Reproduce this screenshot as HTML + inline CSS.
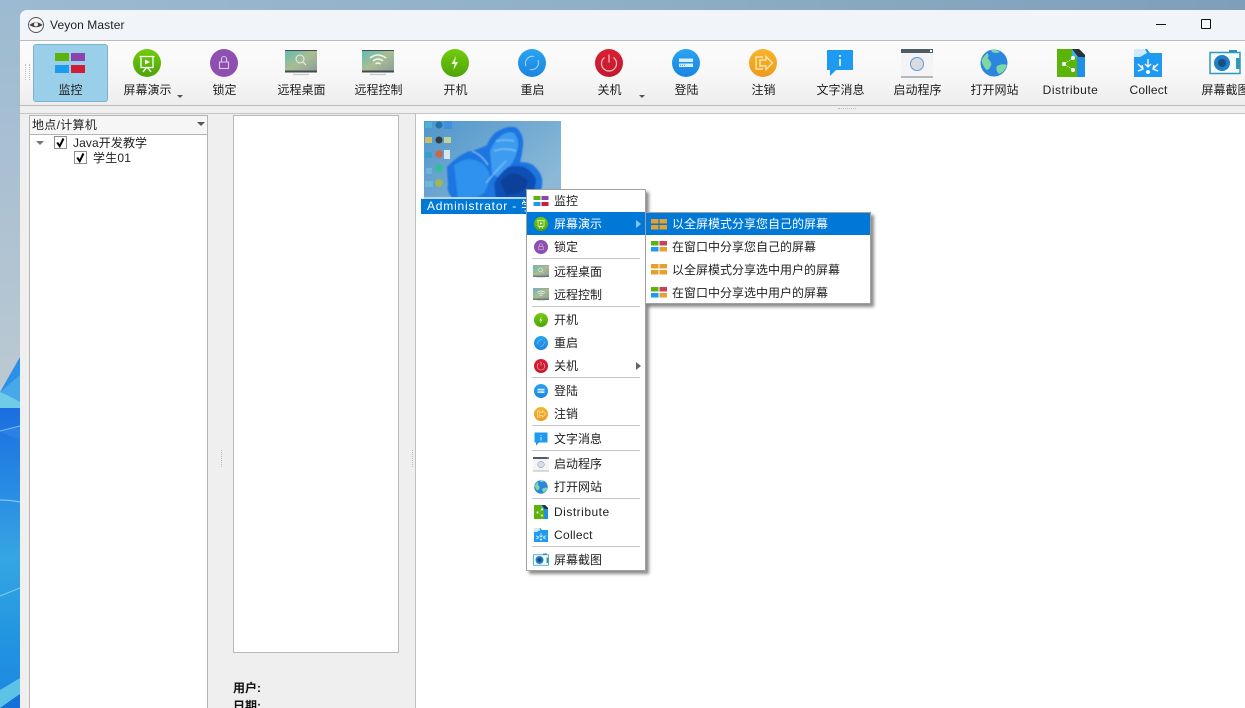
<!DOCTYPE html>
<html lang="zh"><head><meta charset="utf-8"><title>Veyon Master</title>
<style>
html,body{margin:0;padding:0;width:1245px;height:708px;overflow:hidden;background:#9ab8cf}
body{position:relative;font:12px/16px "Liberation Sans","Noto Sans CJK SC",sans-serif;color:#1a1a1a}
div,svg{position:absolute;box-sizing:border-box}
.l{width:77px;top:82px;text-align:center;white-space:nowrap;line-height:16px;color:#1e1e1e}
.ti{top:47px;width:32px;height:32px}
.mi{left:533px;width:16px;height:16px;margin-top:1px}
.mt{left:554px;white-space:nowrap;color:#1e1e1e;line-height:16px;margin-top:1px}
.sep{left:532px;width:108px;height:1px;background:#c6c6c6}
.st{left:672px;white-space:nowrap;color:#1e1e1e;line-height:16px}
.si{left:651px;width:16px;height:11px}
.cb{width:13px;height:13px;background:#fff;border:1px solid #8f8f8f}
</style></head><body>
<svg width="0" height="0" style="left:0;top:0">
<defs>
<linearGradient id="gg" x1="0" y1="0" x2="0" y2="1"><stop offset="0" stop-color="#72cc0c"/><stop offset="1" stop-color="#4ea30a"/></linearGradient>
<linearGradient id="gb" x1="0" y1="0" x2="0" y2="1"><stop offset="0" stop-color="#2aa4f0"/><stop offset="1" stop-color="#1b84e2"/></linearGradient>
<linearGradient id="gr" x1="0" y1="0" x2="0" y2="1"><stop offset="0" stop-color="#dc1f33"/><stop offset="1" stop-color="#c01a30"/></linearGradient>
<linearGradient id="go" x1="0" y1="0" x2="0" y2="1"><stop offset="0" stop-color="#f6b52c"/><stop offset="1" stop-color="#ee9a1e"/></linearGradient>
<linearGradient id="gs" x1="0" y1="0" x2="1" y2="1"><stop offset="0" stop-color="#5fbcb4"/><stop offset=".5" stop-color="#a9bd92"/><stop offset="1" stop-color="#8a9c9c"/></linearGradient>
<symbol id="i-mon" viewBox="0 0 32 32"><rect x="1" y="6" width="14" height="8" fill="#5cb30b"/><rect x="17" y="6" width="14" height="8" fill="#8e44ad"/><rect x="1" y="18" width="14" height="8" fill="#1e9bf0"/><rect x="17" y="18" width="14" height="8" fill="#d01c34"/></symbol>
<symbol id="i-dem" viewBox="0 0 32 32"><circle cx="16" cy="16" r="14" fill="url(#gg)"/><path d="M8.500 9.500h15M10 9.500v11h12v-11M16 20.500v1M12 25l3-4M20 25l-3-4" fill="none" stroke="#fff" stroke-width="1.300"/><path d="M14 12.500l5 2.500-5 2.500z" fill="#fff"/></symbol>
<symbol id="i-lock" viewBox="0 0 32 32"><circle cx="16" cy="16" r="14" fill="#8e4fb0"/><rect x="11.500" y="15" width="9" height="6.500" fill="none" stroke="#dcc6e8" stroke-width="1.100"/><path d="M13.500 15v-3a2.500 2.500 0 0 1 5 0v3" fill="none" stroke="#dcc6e8" stroke-width="1.100"/></symbol>
<symbol id="i-rd" viewBox="0 0 32 32"><rect x="0" y="3" width="32" height="22" fill="url(#gs)"/><path d="M0 3h32v1H0zM0 23.500h32v2H0z" fill="#454a50"/><path d="M8 27.500h16" stroke="#c5c8ca" stroke-width="1.300"/><circle cx="15" cy="12" r="4" fill="none" stroke="#e8eeee"/><path d="M18 15l3 3" stroke="#e8eeee"/></symbol>
<symbol id="i-rc" viewBox="0 0 32 32"><rect x="0" y="3" width="32" height="22" fill="url(#gs)"/><path d="M0 3h32v1H0zM0 23.500h32v2H0z" fill="#454a50"/><path d="M8 27.500h16" stroke="#c5c8ca" stroke-width="1.300"/><path d="M8 11q8-6 16 0M11 14q5-4 10 0M13.500 17q2.500-2 5 0" fill="none" stroke="#f1f5f2" stroke-width="1.500"/></symbol>
<symbol id="i-on" viewBox="0 0 32 32"><circle cx="16" cy="16" r="14" fill="url(#gg)"/><path d="M17 9l-4.500 8h3l-1 6 4.500-8h-3z" fill="#eaf8d8"/></symbol>
<symbol id="i-re" viewBox="0 0 32 32"><circle cx="16" cy="16" r="14" fill="url(#gb)"/><path d="M10 19a7 7 0 0 1 8-9.500M22 13a7 7 0 0 1-8 9.500" fill="none" stroke="#a9d8f8" stroke-width="1"/></symbol>
<symbol id="i-off" viewBox="0 0 32 32"><circle cx="16" cy="16" r="14" fill="url(#gr)"/><path d="M11.500 10.500a7.500 7.500 0 1 0 9 0" fill="none" stroke="#f4c2c8" stroke-width="1.200"/><path d="M16 7.500v8" stroke="#f4c2c8" stroke-width="1.200"/></symbol>
<symbol id="i-log" viewBox="0 0 32 32"><circle cx="16" cy="16" r="14" fill="url(#gb)"/><rect x="9" y="11.500" width="14" height="3.500" fill="#d9eefc"/><rect x="9" y="16.500" width="14" height="3.500" fill="#d9eefc"/><path d="M10 18.200h5" stroke="#2a8fe0" stroke-dasharray="1 1"/></symbol>
<symbol id="i-out" viewBox="0 0 32 32"><circle cx="16" cy="16" r="14" fill="url(#go)"/><path d="M16 10H9v12h7" fill="none" stroke="#fde3a6" stroke-width="1.500"/><path d="M13 13h6v-3.500l6.500 6.500-6.500 6.500V19h-6z" fill="none" stroke="#fde3a6" stroke-width="1.500"/></symbol>
<symbol id="i-msg" viewBox="0 0 32 32"><path d="M3 3h26v20H12l-6 6v-6H3z" fill="#1e9bf0"/><rect x="15" y="8" width="2" height="2" fill="#cfeafc"/><rect x="15" y="12" width="2" height="7" fill="#cfeafc"/></symbol>
<symbol id="i-app" viewBox="0 0 32 32"><rect x="0" y="2" width="32" height="29" fill="#f4f4f6"/><rect x="0" y="2" width="32" height="4" fill="#4f5b66"/><rect x="29" y="3" width="2" height="2" fill="#fff"/><rect x="0" y="29" width="32" height="2" fill="#b5b8ba"/><circle cx="16" cy="17" r="6.500" fill="#d9dde2" stroke="#5d9ad6" stroke-width="1"/></symbol>
<symbol id="i-web" viewBox="0 0 32 32"><circle cx="16" cy="16" r="13.500" fill="#2a86de"/><path d="M3.500 13q3-5 6-7 2 3 0 5 3 3 4 6-2 6-5 6-4-4-5-10zM13 3q5-1 9 2-4 2-8 0zM19 19q6-3 10-1-2 7-8 9-4-4-2-8z" fill="#7fd7a4"/></symbol>
<symbol id="i-dis" viewBox="0 0 32 32"><path d="M2 2h22l6 6v22H2z" fill="#5cb30b"/><path d="M22 2h2l6 6v22h-8z" fill="#1e90e8"/><path d="M17 2h7l6 6v2h-7z" fill="#2b3138"/><path d="M17 2l6 8h-6z" fill="#35b6e8"/><circle cx="9" cy="17" r="2" fill="#fff"/><circle cx="18" cy="11" r="2" fill="#fff"/><circle cx="18" cy="23" r="2" fill="#fff"/><path d="M9 17l9-6M9 17l9 6" stroke="#fff" stroke-width=".7" stroke-dasharray="1 1"/></symbol>
<symbol id="i-col" viewBox="0 0 32 32"><path d="M2 2h13l3 4h12v24H2z" fill="#1e9bf0"/><path d="M2 2h11l2 4-7 4H2z" fill="#cfeafc"/><path d="M16 12v8M13 17l3 3 3-3M6 17l5 5M6 24l5-2-1-4M26 17l-5 5M26 24l-5-2 1-4" fill="none" stroke="#fff" stroke-width="1.300"/><circle cx="16" cy="25" r="2" fill="#fff"/></symbol>
<symbol id="i-shot" viewBox="0 0 32 32"><rect x="20" y="3" width="8" height="3" fill="#2b8fb0"/><rect x="1" y="5.500" width="30" height="21" fill="#f6fafb" stroke="#2f9ab8" stroke-width="1.500"/><circle cx="13" cy="16" r="8" fill="#1f7fc8"/><circle cx="13" cy="16" r="4" fill="#17507f"/><rect x="27" y="11" width="4" height="11" fill="#2f9ab8"/></symbol>
<symbol id="i-s1" viewBox="0 0 16 11"><rect x="0" y="0" width="7.500" height="4.500" fill="#e6a02c"/><rect x="8.500" y="0" width="7.500" height="4.500" fill="#e6a02c"/><rect x="0" y="6" width="7.500" height="4.500" fill="#e6a02c"/><rect x="8.500" y="6" width="7.500" height="4.500" fill="#e6a02c"/></symbol>
<symbol id="i-s2" viewBox="0 0 16 11"><rect x="0" y="0" width="7.500" height="4.500" fill="#5cb30b"/><rect x="8.500" y="0" width="7.500" height="4.500" fill="#c8405c"/><rect x="0" y="6" width="7.500" height="4.500" fill="#1e9bf0"/><rect x="8.500" y="6" width="7.500" height="4.500" fill="#e8a030"/></symbol>
</defs></svg>

<!-- desktop -->
<div style="left:0;top:0;width:1245px;height:10px;background:linear-gradient(90deg,#9cbad1,#92b1ca 40%,#7e9fba)"></div>
<svg style="left:0;top:0" width="20" height="708" viewBox="0 0 20 708">
<defs><linearGradient id="dk" x1="0" y1="0" x2="0" y2="1"><stop offset="0" stop-color="#9cbad1"/><stop offset="1" stop-color="#bcc9d2"/></linearGradient>
<linearGradient id="db" x1="0" y1="0" x2="0" y2="1"><stop offset="0" stop-color="#1a6ee0"/><stop offset=".3" stop-color="#2a8fe4"/><stop offset=".5" stop-color="#35a6e2"/><stop offset=".75" stop-color="#2396e2"/><stop offset="1" stop-color="#1b86de"/></linearGradient></defs>
<rect width="20" height="400" fill="url(#dk)"/>
<path d="M0 392L20 357V408H0z" fill="#2a90e8"/>
<path d="M0 392L20 375V402Q10 396 0 392z" fill="#46a8e8"/>
<path d="M0 392Q10 396 20 402V409H0z" fill="#6fcbe6"/>
<rect y="408" width="20" height="300" fill="url(#db)"/>
<path d="M0 432L20 440V426z" fill="#2a80e4"/>
<path d="M0 431L20 426" stroke="#7cc0ee" stroke-width="1"/>
<path d="M0 500Q10 500 20 502" stroke="#8fd4ee" stroke-width="1" fill="none"/>
<path d="M0 596L20 588" stroke="#7ed0ea" stroke-width="1"/>
<path d="M0 690L20 678V694L0 708z" fill="#5cc2e6"/>
<path d="M0 708L20 694V708z" fill="#1570d8"/>
</svg>

<!-- window -->
<div style="left:20px;top:10px;width:1225px;height:698px;background:#efefef;border-radius:7px 0 0 0;overflow:hidden">
 <div style="left:0;top:0;width:1225px;height:30px;background:#f1f4f9"></div>
 <div style="left:0;top:30px;width:1225px;height:1px;background:#bcbcbc"></div>
 <div style="left:0;top:31px;width:1225px;height:64px;background:linear-gradient(#fbfbfb,#f8f8f8 50%,#ededed)"></div>
 <div style="left:0;top:95px;width:1225px;height:1px;background:#bcbcbc"></div>
 <div style="left:0;top:103px;width:1225px;height:1px;background:#c4c4c4"></div>
</div>

<!-- title bar -->
<svg style="left:27px;top:16px" width="18" height="18" viewBox="0 0 18 18"><circle cx="9" cy="9" r="7.500" fill="#f5f5f5" stroke="#555" stroke-width="1"/><path d="M2.500 9Q9 3.500 15.500 9 9 13.500 2.500 9z" fill="#444"/><circle cx="9" cy="8.500" r="2" fill="#eee"/></svg>
<div style="left:50px;top:17px;color:#222;font-size:12px;letter-spacing:.1px;white-space:nowrap">Veyon Master</div>
<div style="left:1156px;top:24px;width:10px;height:1px;background:#111"></div>
<div style="left:1201px;top:19px;width:10px;height:10px;border:1px solid #111;border-radius:1px"></div>

<!-- toolbar -->
<div style="left:25px;top:64px;width:5px;height:16px;border-left:1px dotted #bbb;border-right:1px dotted #bbb"></div>
<div style="left:33px;top:44px;width:75px;height:58px;background:#99cfe8;border:1px solid #79b4cf;border-radius:3px"></div>
<svg class="ti" style="left:54px"><use href="#i-mon"/></svg>
<svg class="ti" style="left:131px"><use href="#i-dem"/></svg>
<svg class="ti" style="left:208px"><use href="#i-lock"/></svg>
<svg class="ti" style="left:285px"><use href="#i-rd"/></svg>
<svg class="ti" style="left:362px"><use href="#i-rc"/></svg>
<svg class="ti" style="left:439px"><use href="#i-on"/></svg>
<svg class="ti" style="left:516px"><use href="#i-re"/></svg>
<svg class="ti" style="left:593px"><use href="#i-off"/></svg>
<svg class="ti" style="left:670px"><use href="#i-log"/></svg>
<svg class="ti" style="left:747px"><use href="#i-out"/></svg>
<svg class="ti" style="left:824px"><use href="#i-msg"/></svg>
<svg class="ti" style="left:901px"><use href="#i-app"/></svg>
<svg class="ti" style="left:978px"><use href="#i-web"/></svg>
<svg class="ti" style="left:1055px"><use href="#i-dis"/></svg>
<svg class="ti" style="left:1132px"><use href="#i-col"/></svg>
<svg class="ti" style="left:1209px"><use href="#i-shot"/></svg>

<div class="l" style="left:32px">监控</div>
<div class="l" style="left:109px">屏幕演示</div>
<div class="l" style="left:186px">锁定</div>
<div class="l" style="left:263px">远程桌面</div>
<div class="l" style="left:340px">远程控制</div>
<div class="l" style="left:417px">开机</div>
<div class="l" style="left:494px">重启</div>
<div class="l" style="left:571px">关机</div>
<div class="l" style="left:648px">登陆</div>
<div class="l" style="left:725px">注销</div>
<div class="l" style="left:802px">文字消息</div>
<div class="l" style="left:879px">启动程序</div>
<div class="l" style="left:956px">打开网站</div>
<div class="l" style="left:1032px;letter-spacing:.5px">Distribute</div>
<div class="l" style="left:1110px;letter-spacing:.2px">Collect</div>
<div class="l" style="left:1187px">屏幕截图</div>
<div style="left:177px;top:95px;width:0;height:0;border:3px solid transparent;border-top:3px solid #555;border-bottom:0"></div>
<div style="left:639px;top:95px;width:0;height:0;border:3px solid transparent;border-top:3px solid #555;border-bottom:0"></div>
<div style="left:838px;top:108px;width:18px;height:1px;border-top:1px dotted #c0c0c0"></div>

<!-- left panel -->
<div style="left:29px;top:115px;width:179px;height:600px;background:#fff;border:1px solid #b4b4b4"></div>
<div style="left:29px;top:115px;width:179px;height:20px;background:#f6f6f6;border:1px solid #b4b4b4"></div>
<div style="left:32px;top:117px;white-space:nowrap;color:#222;letter-spacing:.3px">地点/计算机</div>
<div style="left:197px;top:122px;width:0;height:0;border:4px solid transparent;border-top:4px solid #555;border-bottom:0"></div>
<div style="left:36px;top:141px;width:0;height:0;border:4px solid transparent;border-top:4px solid #777;border-bottom:0"></div>
<div class="cb" style="left:54px;top:136px"></div>
<svg style="left:54px;top:136px" width="13" height="13" viewBox="0 0 13 13"><path d="M3.200 6.500l2.500 3.700 3.800-7.700" fill="none" stroke="#000" stroke-width="2"/></svg>
<div style="left:73px;top:135px;white-space:nowrap;letter-spacing:.1px;color:#222">Java开发教学</div>
<div class="cb" style="left:74px;top:151px"></div>
<svg style="left:74px;top:151px" width="13" height="13" viewBox="0 0 13 13"><path d="M3.200 6.500l2.500 3.700 3.800-7.700" fill="none" stroke="#000" stroke-width="2"/></svg>
<div style="left:93px;top:150px;white-space:nowrap;letter-spacing:.2px;color:#222">学生01</div>

<!-- grips -->
<div style="left:221px;top:450px;width:1px;height:17px;border-left:1px dotted #bbb"></div>
<div style="left:412px;top:450px;width:1px;height:17px;border-left:1px dotted #bbb"></div>

<!-- middle panel -->
<div style="left:233px;top:115px;width:166px;height:538px;background:#fff;border:1px solid #b8b8b8"></div>
<div style="left:233px;top:680px;font-weight:bold;color:#111;white-space:nowrap">用户:</div>
<div style="left:233px;top:698px;font-weight:bold;color:#111;white-space:nowrap">日期:</div>

<!-- main area -->
<div style="left:415px;top:114px;width:830px;height:594px;background:#fff;border-left:1px solid #c0c0c0"></div>

<!-- thumbnail -->
<svg style="left:424px;top:121px" width="137" height="78" viewBox="0 0 137 78">
<defs><linearGradient id="tb" x1="0" y1="0" x2="1" y2=".6"><stop offset="0" stop-color="#4f96cc"/><stop offset="1" stop-color="#8ab8d6"/></linearGradient>
<filter id="bl"><feGaussianBlur stdDeviation=".9"/></filter></defs>
<rect width="137" height="78" fill="url(#tb)"/>
<g filter="url(#bl)">
<path d="M23 46Q32 36 43 31 56 28 63 24 68 12 76 9 86 4 93 7 100 14 99 24 98 34 96 41 104 41 109 44 116 50 118 57 119 66 116 71L113 78H29Q22 70 24 64z" fill="#1a74e0"/>
<path d="M30 44Q40 38 46 38 56 40 60 44 66 50 66 56 64 66 60 72L50 78H34z" fill="#2f92ee"/>
<path d="M66 30Q70 20 78 14 84 10 90 12 95 18 94 26 92 36 88 42 82 52 76 58L68 52z" fill="#3c9cf0"/>
<path d="M70 62Q76 52 84 46 92 44 100 46 108 50 112 58 112 66 108 72L100 78H72z" fill="#0c50b4"/>
<path d="M76 60Q82 54 90 52 98 54 104 60 102 68 96 72L82 74z" fill="#0a3f98"/>
<path d="M48 30Q58 34 64 44M72 20Q82 18 90 20M70 30Q80 26 92 30M62 62Q72 50 82 40" stroke="#7cc4f4" stroke-width="1.200" fill="none"/>
</g>
<g opacity=".9"><rect x="1" y="1" width="7" height="6" fill="#4eb4d8"/><circle cx="15" cy="4" r="3.500" fill="#1c6fa0"/><rect x="20" y="0" width="8" height="8" fill="#3f8fe0"/>
<rect x="1" y="16" width="7" height="6" fill="#d8c05c"/><circle cx="15" cy="19" r="3.500" fill="#333"/><rect x="20" y="16" width="7" height="6" fill="#d0d890"/>
<rect x="1" y="31" width="7" height="6" fill="#35a0d0"/><circle cx="15" cy="33" r="3.800" fill="#d8603c"/><rect x="20" y="29" width="6" height="9" fill="#e8eef2"/>
<rect x="2" y="47" width="6" height="6" fill="#6fb8d8"/><circle cx="15" cy="47" r="4" fill="#30c090"/>
<rect x="1" y="60" width="8" height="6" fill="#70b8d8"/><circle cx="15" cy="62" r="4" fill="#a8b840"/></g>
<rect y="76" width="137" height="2" fill="#b8d8ee"/>
</svg>
<div style="left:421px;top:199px;width:110px;height:15px;background:#0078d7;color:#fff;padding-left:6px;line-height:15px;letter-spacing:.8px;white-space:nowrap;overflow:hidden">Administrator - 学</div>

<!-- context menu -->
<div style="left:526px;top:189px;width:120px;height:382px;background:#fff;border:1px solid #a0a0a0;box-shadow:3px 3px 3px rgba(0,0,0,.45)"></div>
<div style="left:527px;top:212px;width:118px;height:23px;background:#0078d7"></div>
<div style="left:636px;top:220px;width:0;height:0;border:4px solid transparent;border-left:5px solid #8ec4ee;border-right:0"></div>
<div style="left:636px;top:362px;width:0;height:0;border:4px solid transparent;border-left:5px solid #666;border-right:0"></div>
<div class="sep" style="top:258px"></div>
<div class="sep" style="top:306px"></div>
<div class="sep" style="top:377px"></div>
<div class="sep" style="top:425px"></div>
<div class="sep" style="top:450px"></div>
<div class="sep" style="top:498px"></div>
<div class="sep" style="top:546px"></div>

<svg class="mi" style="top:192px"><use href="#i-mon" width="16" height="16"/></svg>
<svg class="mi" style="top:215px"><use href="#i-dem" width="16" height="16"/></svg>
<svg class="mi" style="top:238px"><use href="#i-lock" width="16" height="16"/></svg>
<svg class="mi" style="top:263px"><use href="#i-rd" width="16" height="16"/></svg>
<svg class="mi" style="top:286px"><use href="#i-rc" width="16" height="16"/></svg>
<svg class="mi" style="top:311px"><use href="#i-on" width="16" height="16"/></svg>
<svg class="mi" style="top:334px"><use href="#i-re" width="16" height="16"/></svg>
<svg class="mi" style="top:357px"><use href="#i-off" width="16" height="16"/></svg>
<svg class="mi" style="top:382px"><use href="#i-log" width="16" height="16"/></svg>
<svg class="mi" style="top:405px"><use href="#i-out" width="16" height="16"/></svg>
<svg class="mi" style="top:430px"><use href="#i-msg" width="16" height="16"/></svg>
<svg class="mi" style="top:455px"><use href="#i-app" width="16" height="16"/></svg>
<svg class="mi" style="top:478px"><use href="#i-web" width="16" height="16"/></svg>
<svg class="mi" style="top:503px"><use href="#i-dis" width="16" height="16"/></svg>
<svg class="mi" style="top:526px"><use href="#i-col" width="16" height="16"/></svg>
<svg class="mi" style="top:551px"><use href="#i-shot" width="16" height="16"/></svg>

<div class="mt" style="top:192px">监控</div>
<div class="mt" style="top:215px;color:#fff">屏幕演示</div>
<div class="mt" style="top:238px">锁定</div>
<div class="mt" style="top:263px">远程桌面</div>
<div class="mt" style="top:286px">远程控制</div>
<div class="mt" style="top:311px">开机</div>
<div class="mt" style="top:334px">重启</div>
<div class="mt" style="top:357px">关机</div>
<div class="mt" style="top:382px">登陆</div>
<div class="mt" style="top:405px">注销</div>
<div class="mt" style="top:430px">文字消息</div>
<div class="mt" style="top:455px">启动程序</div>
<div class="mt" style="top:478px">打开网站</div>
<div class="mt" style="top:503px;letter-spacing:.5px">Distribute</div>
<div class="mt" style="top:526px;letter-spacing:.3px">Collect</div>
<div class="mt" style="top:551px">屏幕截图</div>

<!-- submenu -->
<div style="left:645px;top:212px;width:226px;height:92px;background:#fff;border:1px solid #a0a0a0;box-shadow:3px 3px 3px rgba(0,0,0,.45)"></div>
<div style="left:646px;top:213px;width:224px;height:22px;background:#0078d7"></div>
<svg class="si" style="top:219px"><use href="#i-s1" width="16" height="11"/></svg>
<svg class="si" style="top:241px"><use href="#i-s2" width="16" height="11"/></svg>
<svg class="si" style="top:264px"><use href="#i-s1" width="16" height="11"/></svg>
<svg class="si" style="top:287px"><use href="#i-s2" width="16" height="11"/></svg>
<div class="st" style="top:216px;color:#fff">以全屏模式分享您自己的屏幕</div>
<div class="st" style="top:239px">在窗口中分享您自己的屏幕</div>
<div class="st" style="top:262px">以全屏模式分享选中用户的屏幕</div>
<div class="st" style="top:285px">在窗口中分享选中用户的屏幕</div>
</body></html>
